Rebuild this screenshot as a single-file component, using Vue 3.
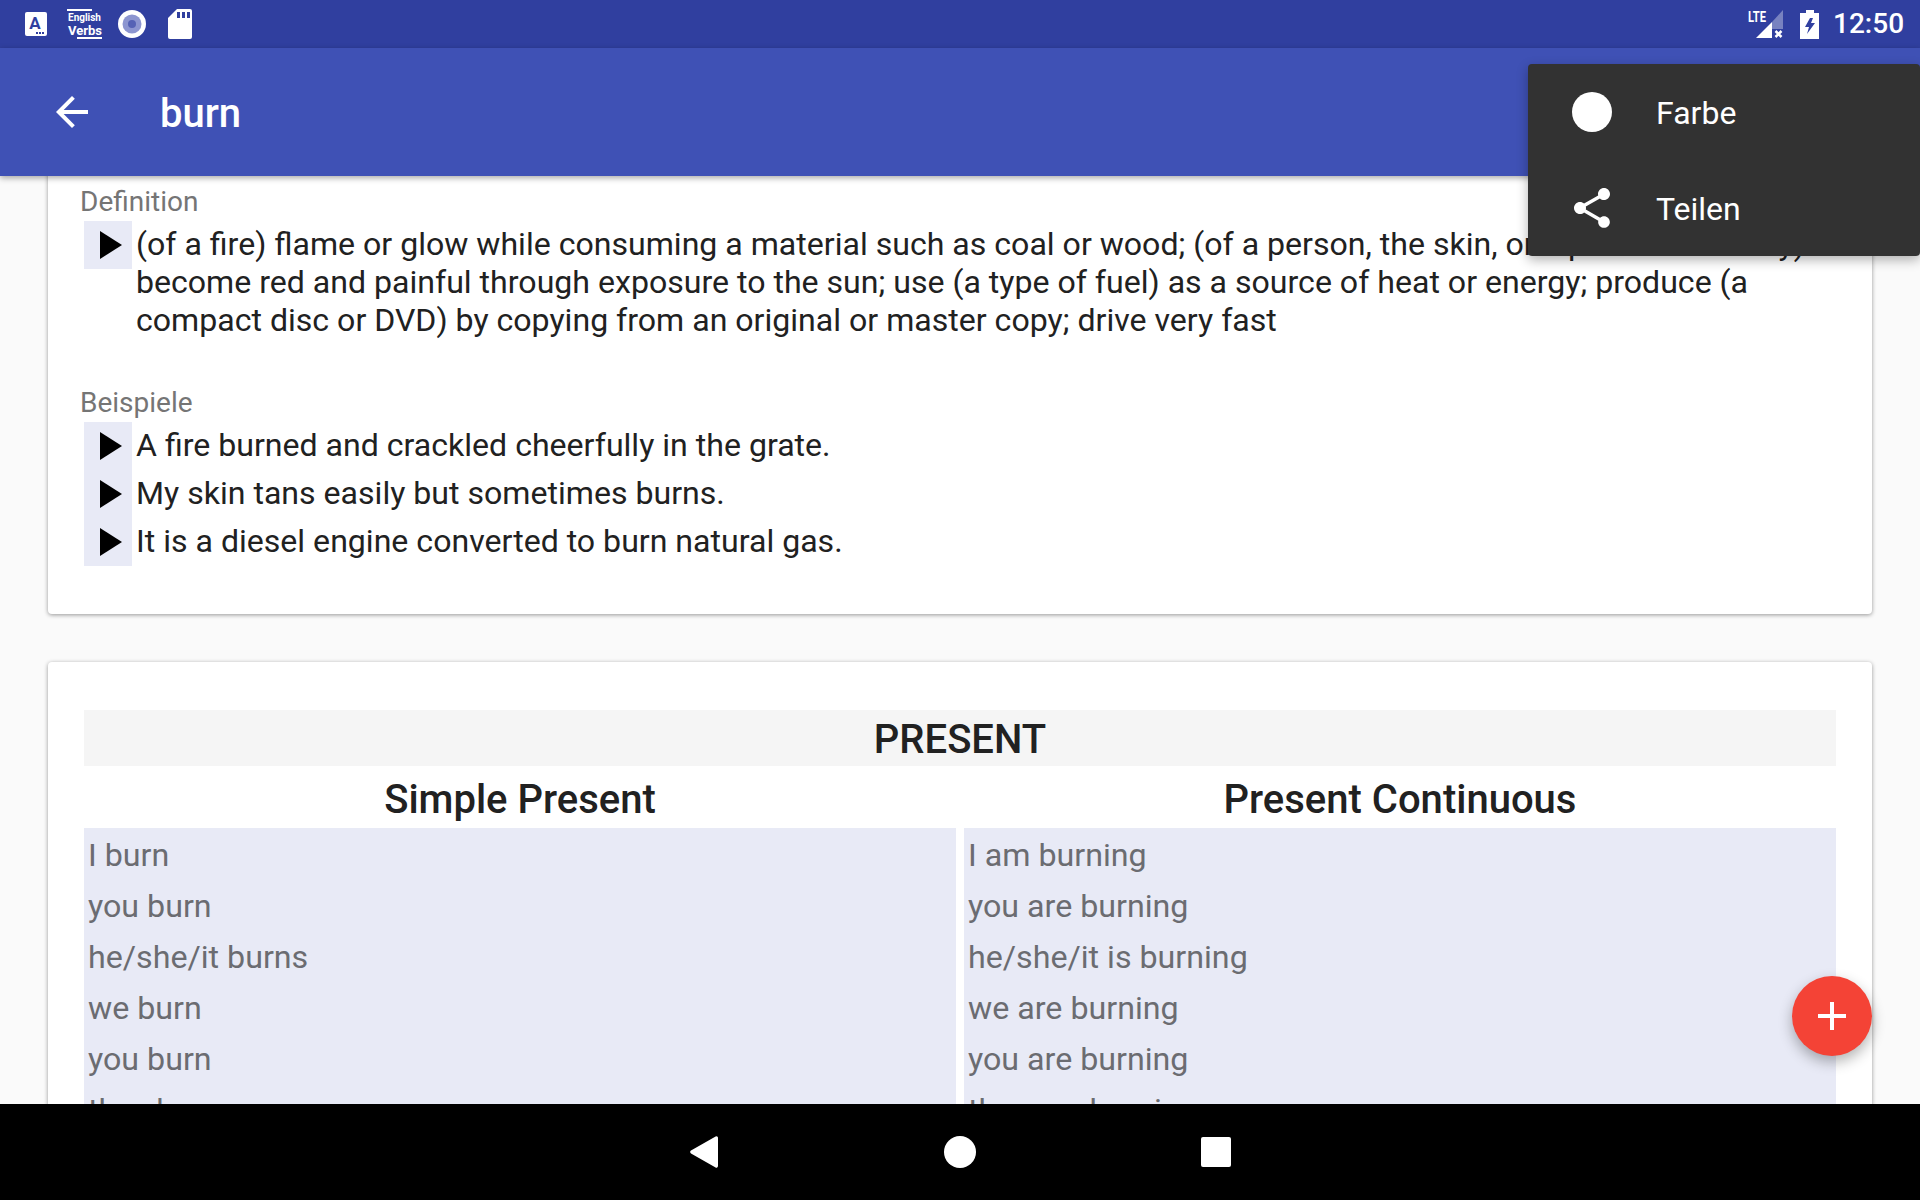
<script setup>
const definition = 'become red and painful through exposure to the sun; use (a type of fuel) as a source of heat or energy; produce (a compact disc or DVD) by copying from an original or master copy; drive very fast'
const firstPart = '(of a fire) flame or glow while consuming a material such as coal or wood; (of a person, the skin, or a part of the body) '

const examples = [
  'A fire burned and crackled cheerfully in the grate.',
  'My skin tans easily but sometimes burns.',
  'It is a diesel engine converted to burn natural gas.'
]

const tenses = [
  {
    title: 'Simple Present',
    rows: ['I burn', 'you burn', 'he/she/it burns', 'we burn', 'you burn', 'they burn']
  },
  {
    title: 'Present Continuous',
    rows: ['I am burning', 'you are burning', 'he/she/it is burning', 'we are burning', 'you are burning', 'they are burning']
  }
]
</script>

<template>
  <div class="screen">
    <div class="status-bar">
      <div class="status-left">
        <svg class="ic-a" width="22" height="24" viewBox="0 0 22 24">
          <rect width="22" height="24" rx="2" fill="#fff" />
          <text x="10" y="17" text-anchor="middle" class="ic-a-letter">A</text>
          <rect x="11" y="20" width="2" height="2" fill="#303f9f" />
          <rect x="14" y="20" width="2" height="2" fill="#303f9f" />
          <rect x="17" y="20" width="2" height="2" fill="#303f9f" />
        </svg>
        <div class="ic-verbs">
          <span class="verbs-top"></span>
          <span class="verbs-en">English</span>
          <span class="verbs-v">Verbs</span>
          <span class="verbs-bottom"></span>
        </div>
        <svg class="ic-disc" width="28" height="28" viewBox="0 0 28 28">
          <circle cx="14" cy="14" r="14" fill="#fff" />
          <circle cx="14" cy="14" r="9.5" fill="#8c95d0" />
          <circle cx="14" cy="14" r="4" fill="#5562b5" />
        </svg>
        <svg class="ic-sd" width="24" height="30" viewBox="0 0 24 30">
          <path d="M9 0h13a2 2 0 0 1 2 2v26a2 2 0 0 1-2 2H2a2 2 0 0 1-2-2V9z" fill="#fff" />
          <rect x="9" y="3" width="3" height="6" fill="#303f9f" />
          <rect x="14" y="3" width="3" height="6" fill="#303f9f" />
          <rect x="19" y="3" width="3" height="6" fill="#303f9f" />
        </svg>
      </div>
      <div class="status-right">
        <svg class="ic-signal" width="36" height="30" viewBox="0 0 36 30">
          <text x="1" y="13" class="lte" textLength="18" lengthAdjust="spacingAndGlyphs">LTE</text>
          <path d="M25 13L36 1v19H25z" fill="#fff" fill-opacity=".35" />
          <path d="M9 29l16-16v16z" fill="#fff" />
          <path d="M28.500 22l6 6m0-6l-6 6" stroke="#fff" stroke-width="2.500" fill="none" />
        </svg>
        <svg class="ic-batt" width="19" height="29" viewBox="0 0 19 29">
          <path d="M6 0h8v3h5v26H0V3h6z" fill="#fff" />
          <path d="M10 8L5 17h4l-2 7 8-11h-4l2-5z" fill="#303f9f" />
        </svg>
        <span class="clock">12:50</span>
      </div>
    </div>

    <header class="app-bar">
      <svg class="back" width="48" height="48" viewBox="0 0 24 24">
        <path d="M20 11H7.830l5.590-5.590L12 4l-8 8 8 8 1.410-1.410L7.830 13H20v-2z" fill="#fff" />
      </svg>
      <h1>burn</h1>
    </header>

    <main class="content">
      <section class="card first">
        <div class="label">Definition</div>
        <div class="say-row multi">
          <span class="play"><i></i></span>
          <p>{{ firstPart }}{{ definition }}</p>
        </div>
        <div class="label second-label">Beispiele</div>
        <div v-for="ex in examples" :key="ex" class="say-row">
          <span class="play"><i></i></span>
          <p>{{ ex }}</p>
        </div>
      </section>

      <section class="card table-card">
        <div class="tense-title">PRESENT</div>
        <div class="tense-grid">
          <div v-for="t in tenses" :key="t.title" class="tense-col">
            <h3>{{ t.title }}</h3>
            <div class="rows">
              <div v-for="(r, i) in t.rows" :key="i" class="row">{{ r }}</div>
            </div>
          </div>
        </div>
      </section>
    </main>

    <nav class="nav-bar">
      <svg width="28" height="32" viewBox="0 0 28 32">
        <path d="M25.600.6L1 14.600a1.600 1.600 0 0 0 0 2.800l24.600 14A1.600 1.600 0 0 0 28 30V2A1.600 1.600 0 0 0 25.600.6z" fill="#fff" />
      </svg>
      <span class="nav-home"></span>
      <span class="nav-recent"></span>
    </nav>

    <div class="menu">
      <div class="menu-item">
        <span class="menu-icon"><span class="dot"></span></span>
        <span class="menu-label">Farbe</span>
      </div>
      <div class="menu-item">
        <span class="menu-icon">
          <svg width="48" height="48" viewBox="0 0 24 24">
            <path d="M18 16.080c-.76 0-1.440.3-1.960.77L8.910 12.700c.05-.23.09-.46.09-.7s-.04-.47-.09-.7l7.050-4.110c.54.5 1.250.81 2.040.81 1.660 0 3-1.340 3-3s-1.340-3-3-3-3 1.340-3 3c0 .24.04.47.09.7L8.040 9.810C7.500 9.310 6.790 9 6 9c-1.660 0-3 1.340-3 3s1.340 3 3 3c.79 0 1.500-.31 2.040-.81l7.120 4.160c-.05.21-.08.43-.08.65 0 1.610 1.310 2.920 2.920 2.920 1.610 0 2.920-1.310 2.920-2.920s-1.310-2.920-2.920-2.920z" fill="#fff" />
          </svg>
        </span>
        <span class="menu-label">Teilen</span>
      </div>
    </div>

    <button class="fab" aria-label="add"><span></span></button>
  </div>
</template>

<style>
html, body {
  margin: 0;
  background: #fafafa;
}
</style>

<style scoped>
.screen {
  position: relative;
  width: 1920px;
  height: 1200px;
  overflow: hidden;
  display: flex;
  flex-direction: column;
  font-family: Roboto, "Liberation Sans", sans-serif;
  background: #fafafa;
  color: #212121;
}

.status-bar {
  height: 48px;
  flex: none;
  background: #303f9f;
  display: flex;
  justify-content: space-between;
  align-items: center;
  padding: 0 17px 0 25px;
  color: #fff;
}

.status-left,
.status-right {
  display: flex;
  align-items: center;
}

.ic-a-letter {
  font: 700 17px Roboto, sans-serif;
  fill: #303f9f;
}

.ic-verbs {
  position: relative;
  width: 35px;
  height: 30px;
  margin-left: 20px;
  font-weight: 700;
  color: #fff;
}

.verbs-top {
  position: absolute;
  left: 0;
  top: 0;
  width: 25px;
  height: 2px;
  background: #fff;
}

.verbs-bottom {
  position: absolute;
  right: 0;
  bottom: 0;
  width: 25px;
  height: 2px;
  background: #fff;
}

.verbs-en {
  position: absolute;
  left: 1px;
  top: 3px;
  font-size: 10px;
  line-height: 11px;
}

.verbs-v {
  position: absolute;
  left: 1px;
  top: 15px;
  font-size: 13px;
  line-height: 13px;
}

.ic-disc {
  margin-left: 16px;
}

.ic-sd {
  margin-left: 22px;
}

.lte {
  font: 700 15px Roboto, sans-serif;
  fill: #fff;
}

.ic-signal {
  margin-right: 17px;
}

.clock {
  margin-left: 14px;
  width: 70px;
  font-size: 28px;
  font-weight: 500;
  line-height: 32px;
  white-space: nowrap;
}

.app-bar {
  position: relative;
  z-index: 2;
  height: 128px;
  flex: none;
  display: flex;
  align-items: center;
  padding-left: 48px;
  background: #3f51b5;
  box-shadow: 0 2px 6px rgba(0, 0, 0, 0.35);
}

.app-bar h1 {
  margin: 3px 0 0 64px;
  font-size: 40px;
  font-weight: 500;
  color: #fff;
}

.content {
  flex: 1;
  min-height: 0;
  overflow: hidden;
  padding: 0 48px;
}

.card {
  background: #fff;
  border-radius: 4px;
  box-shadow: 0 1px 4px rgba(0, 0, 0, 0.4);
  padding: 0 36px;
}

.first {
  margin-top: -10px;
  padding: 20px 36px 48px;
}

.label {
  font-size: 28px;
  line-height: 31px;
  margin: 0 0 4px -4px;
  color: #757575;
}

.second-label {
  margin-top: 48px;
}

.say-row {
  display: flex;
  align-items: flex-start;
}

.say-row p {
  margin: 0;
  font-size: 32.100px;
  line-height: 38px;
  padding: 4px 0 6px 4px;
}

.say-row.multi p {
  padding-bottom: 0;
}

.play {
  flex: none;
  width: 48px;
  height: 48px;
  display: flex;
  align-items: center;
  justify-content: center;
  background: #e8eaf6;
}

.play i {
  display: block;
  margin-left: 6px;
  width: 0;
  height: 0;
  border-style: solid;
  border-width: 14px 0 14px 22px;
  border-color: transparent transparent transparent #000;
}

.table-card {
  margin-top: 48px;
  padding-top: 48px;
}

.tense-title {
  height: 56px;
  background: #f5f5f5;
  text-align: center;
  font-size: 40px;
  font-weight: 500;
  line-height: 59px;
}

.tense-grid {
  display: grid;
  grid-template-columns: 1fr 1fr;
  column-gap: 8px;
}

.tense-col h3 {
  margin: 0;
  height: 62px;
  font-size: 40px;
  font-weight: 500;
  line-height: 67px;
  text-align: center;
}

.rows {
  background: #e8eaf6;
  padding-bottom: 20px;
}

.row {
  height: 51px;
  padding-left: 4px;
  font-size: 32.200px;
  line-height: 55px;
  color: #6b6c71;
}

.nav-bar {
  position: relative;
  z-index: 2;
  height: 96px;
  flex: none;
  background: #000;
  display: flex;
  align-items: center;
  padding-left: 690px;
}

.nav-home {
  width: 32px;
  height: 32px;
  margin-left: 226px;
  border-radius: 50%;
  background: #fff;
}

.nav-recent {
  width: 30px;
  height: 30px;
  margin-left: 225px;
  border-radius: 2px;
  background: #fff;
}

.menu {
  position: absolute;
  z-index: 3;
  top: 64px;
  right: 0;
  width: 392px;
  height: 192px;
  background: #323232;
  border-radius: 4px;
  box-shadow: 0 4px 12px rgba(0, 0, 0, 0.3);
  color: #fff;
}

.menu-item {
  height: 96px;
  display: flex;
  align-items: center;
  padding-left: 40px;
  font-size: 32px;
}

.menu-icon {
  width: 48px;
  height: 48px;
  margin-right: 40px;
  display: flex;
  align-items: center;
  justify-content: center;
}

.menu-label {
  margin-top: 2px;
}

.dot {
  width: 40px;
  height: 40px;
  border-radius: 50%;
  background: #fff;
}

.fab {
  position: absolute;
  z-index: 1;
  left: 1792px;
  top: 976px;
  width: 80px;
  height: 80px;
  padding: 0;
  border: 0;
  border-radius: 50%;
  background: #f44336;
  box-shadow: 0 6px 14px rgba(0, 0, 0, 0.3);
  display: flex;
  align-items: center;
  justify-content: center;
}

.fab span {
  position: relative;
  display: block;
  width: 28px;
  height: 4px;
  background: #fff;
}

.fab span::after {
  content: "";
  position: absolute;
  left: 12px;
  top: -12px;
  width: 4px;
  height: 28px;
  background: #fff;
}
</style>
